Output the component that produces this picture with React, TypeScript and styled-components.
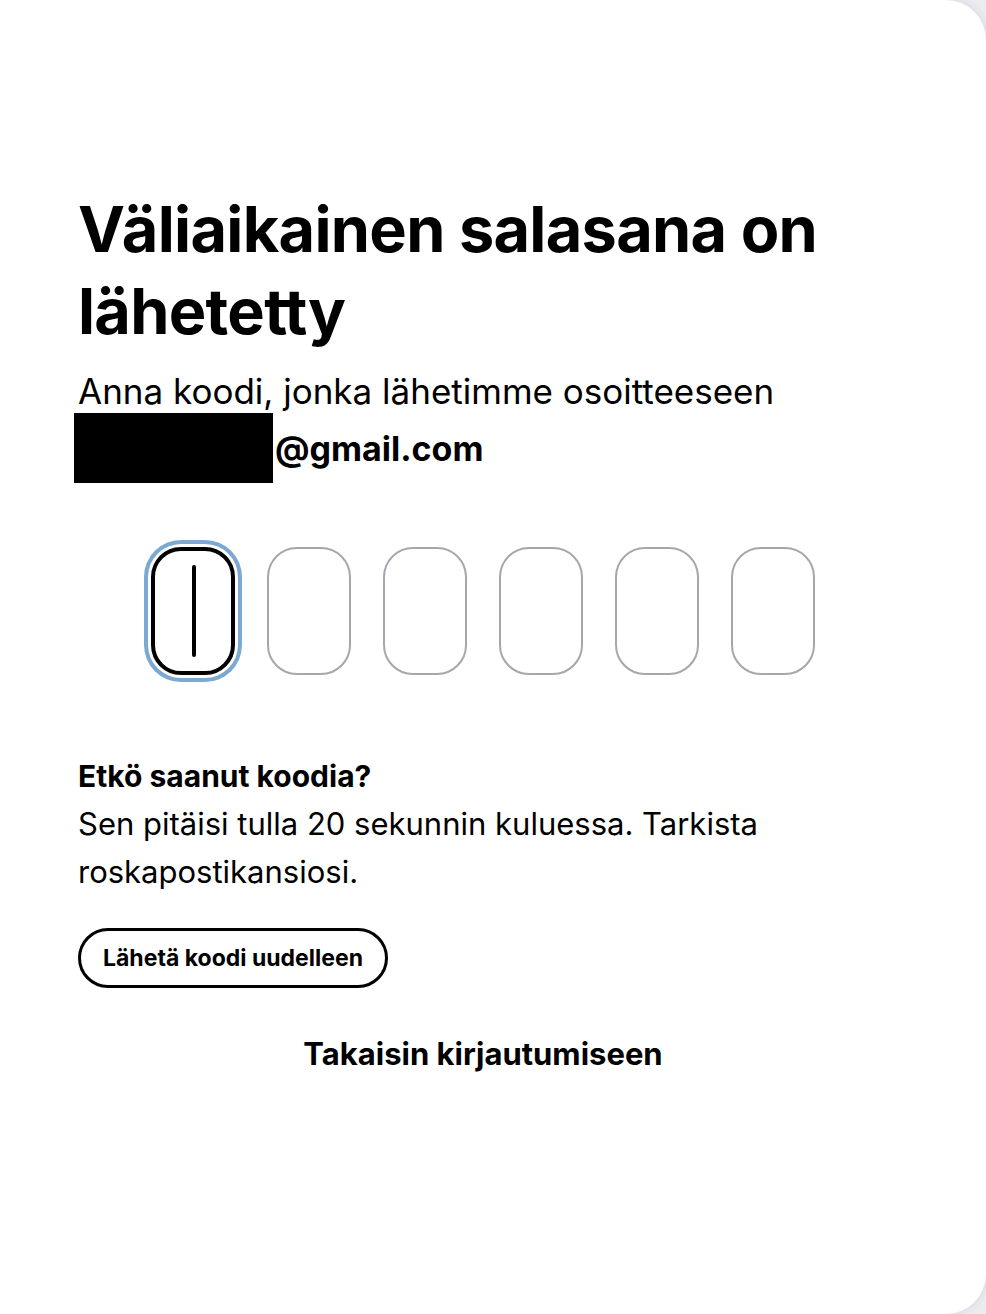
import { createGlobalStyle } from "styled-components";
import styled from "styled-components";

const GlobalStyle = createGlobalStyle`
  html, body {
    margin: 0;
    padding: 0;
    background: #ebebf0;
  }
  body {
    font-family: Inter, "Liberation Sans", sans-serif;
    color: #000;
    -webkit-font-smoothing: antialiased;
  }
  * {
    box-sizing: border-box;
  }
`;

const Card = styled.main`
  min-height: 100vh;
  background: #fff;
  border-radius: 0 40px 40px 0;
  box-shadow: 0 0 10px rgba(30, 30, 60, 0.1);
  padding: 188px 98px 120px 78px;
`;

const Content = styled.div`
  width: 810px;
  display: flex;
  flex-direction: column;
`;

const Title = styled.h1`
  margin: 0;
  font-size: 63px;
  line-height: 82px;
  font-weight: 700;
  letter-spacing: -0.7px;
`;

const Lead = styled.p`
  margin: 17px 0 0;
  font-size: 35px;
  line-height: 44px;
  font-weight: 400;
`;

const Email = styled.span`
  display: block;
  font-size: 34px;
  font-weight: 700;
`;

const Redacted = styled.span`
  display: inline-block;
  width: 199px;
  height: 70px;
  margin-left: -4px;
  margin-right: 2px;
  background: #000;
  vertical-align: -22px;
`;

const CodeRow = styled.div`
  display: flex;
  justify-content: center;
  gap: 32px;
  margin-top: 64px;
`;

const CodeCell = styled.div<{ $focused?: boolean }>`
  width: 84px;
  height: 128px;
  border-radius: 30px;
  background: #fff;
  display: flex;
  align-items: center;
  justify-content: center;
  border: ${({ $focused }) => ($focused ? "4px solid #000" : "2px solid #a6a6ae")};
  box-shadow: ${({ $focused }) =>
    $focused ? "0 0 0 3px #fff, 0 0 0 7px #7ba9d4" : "none"};
`;

const Caret = styled.span`
  width: 4px;
  height: 92px;
  margin-left: 2px;
  border-radius: 2px;
  background: #000;
`;

const HelpTitle = styled.h2`
  margin: 81px 0 0;
  font-size: 30px;
  line-height: 40px;
  font-weight: 700;
`;

const HelpText = styled.p`
  margin: 4px 0 0;
  font-size: 31px;
  line-height: 48px;
  font-weight: 400;
`;

const ResendButton = styled.button`
  align-self: flex-start;
  margin-top: 32px;
  height: 60px;
  padding: 0 22px;
  border: 3px solid #000;
  border-radius: 30px;
  background: #fff;
  font-family: inherit;
  font-size: 23px;
  font-weight: 700;
  color: #000;
  cursor: pointer;
`;

const BackLink = styled.a`
  align-self: center;
  margin-top: 46px;
  font-size: 31px;
  line-height: 40px;
  font-weight: 700;
  color: #000;
  text-decoration: none;
  cursor: pointer;
`;

export default function App() {
  const cells = [0, 1, 2, 3, 4, 5];
  return (
    <>
      <GlobalStyle />
      <Card>
        <Content>
          <Title>Väliaikainen salasana on lähetetty</Title>
          <Lead>
            Anna koodi, jonka lähetimme osoitteeseen
            <Email>
              <Redacted />
              @gmail.com
            </Email>
          </Lead>
          <CodeRow>
            {cells.map((i) => (
              <CodeCell key={i} $focused={i === 0}>
                {i === 0 && <Caret />}
              </CodeCell>
            ))}
          </CodeRow>
          <HelpTitle>Etkö saanut koodia?</HelpTitle>
          <HelpText>
            Sen pitäisi tulla 20 sekunnin kuluessa. Tarkista roskapostikansiosi.
          </HelpText>
          <ResendButton>Lähetä koodi uudelleen</ResendButton>
          <BackLink>Takaisin kirjautumiseen</BackLink>
        </Content>
      </Card>
    </>
  );
}
